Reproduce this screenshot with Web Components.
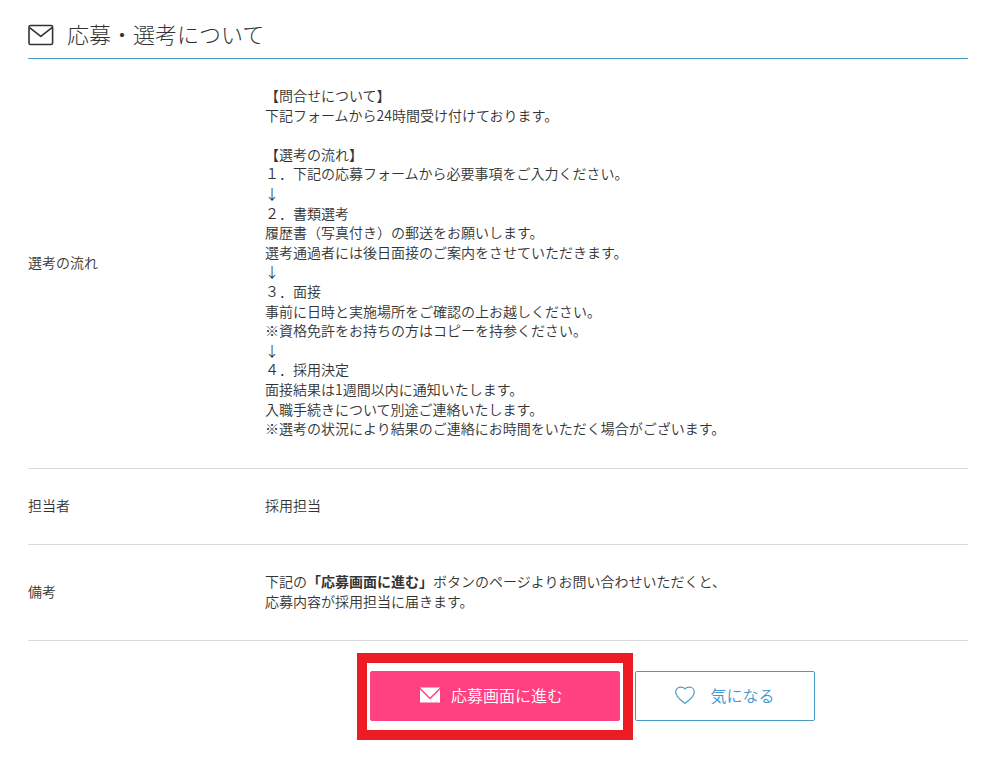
<!DOCTYPE html>
<html lang="ja">
<head>
<meta charset="utf-8">
<meta name="viewport" content="width=device-width, initial-scale=1">
<title>応募・選考について</title>
<style>
  body {
    margin: 0;
    background: #fff;
    color: #333;
    font: 350 14px/1.4 "Noto Sans CJK JP", sans-serif;
    --accent: #4a9bc5;
    --line: #d9d9d9;
  }
</style>
</head>
<body>
<application-section>
  <section-heading slot="heading">応募・選考について</section-heading>
  <selection-details></selection-details>
  <action-bar slot="actions">
    <action-button kind="apply" slot="primary">応募画面に進む</action-button>
    <action-button kind="keep">気になる</action-button>
  </action-bar>
</application-section>

<script>
  function define(name, html) {
    const template = document.createElement('template');
    template.innerHTML = html;
    customElements.define(name, class extends HTMLElement {
      constructor() {
        super();
        this.attachShadow({ mode: 'open' }).append(template.content.cloneNode(true));
      }
    });
  }

  define('application-section', `
    <style>
      :host { display: block; padding: 12px 32px 28px 28px; }
    </style>
    <section>
      <slot name="heading"></slot>
      <slot></slot>
      <slot name="actions"></slot>
    </section>`);

  define('section-heading', `
    <style>
      :host { display: block; border-bottom: 1px solid var(--accent); }
      h2 {
        display: flex; align-items: center; gap: 13px;
        height: 46px; margin: 0;
        font-size: 22px; font-weight: 300; line-height: 32px;
      }
      svg { flex: none; }
      span { padding-bottom: 4px; }
    </style>
    <h2>
      <svg width="26" height="22" viewBox="0 0 26 22" fill="none" stroke="#333" stroke-width="1.6" stroke-linejoin="round" aria-hidden="true">
        <rect x="1" y="1.5" width="23.6" height="19" rx="1.6"/>
        <path d="M1.6 3.6 12.8 12.4 24 3.6"/>
      </svg>
      <span><slot></slot></span>
    </h2>`);

  define('selection-details', `
    <style>
      :host { display: block; }
      table { width: 100%; border-collapse: separate; border-spacing: 0; table-layout: fixed; }
      th, td {
        padding: 27px 2px 29px; text-align: left; vertical-align: middle;
        font-weight: inherit; border-bottom: 1px solid var(--line);
      }
      th { width: 25%; box-sizing: border-box; padding-left: 0; }
      strong { font-weight: 700; }
    </style>
    <table>
      <tbody>
        <tr>
          <th scope="row">選考の流れ</th>
          <td>【問合せについて】<br>下記フォームから24時間受け付けております。<br><br>【選考の流れ】<br>１．下記の応募フォームから必要事項をご入力ください。<br>↓<br>２．書類選考<br>履歴書（写真付き）の郵送をお願いします。<br>選考通過者には後日面接のご案内をさせていただきます。<br>↓<br>３．面接<br>事前に日時と実施場所をご確認の上お越しください。<br>※資格免許をお持ちの方はコピーを持参ください。<br>↓<br>４．採用決定<br>面接結果は1週間以内に通知いたします。<br>入職手続きについて別途ご連絡いたします。<br>※選考の状況により結果のご連絡にお時間をいただく場合がございます。</td>
        </tr>
        <tr>
          <th scope="row">担当者</th>
          <td>採用担当</td>
        </tr>
        <tr>
          <th scope="row">備考</th>
          <td>下記の<strong>「応募画面に進む」</strong>ボタンのページよりお問い合わせいただくと、<br>応募内容が採用担当に届きます。</td>
        </tr>
      </tbody>
    </table>`);

  define('action-bar', `
    <style>
      :host { display: flex; align-items: flex-start; gap: 2px; padding: 12px 0 0 35%; }
      .highlight { border: 10px solid #ec1c24; padding: 8px 3px 9px; }
      .secondary { padding-top: 18px; }
    </style>
    <div class="highlight"><slot name="primary"></slot></div>
    <div class="secondary"><slot></slot></div>`);

  define('action-button', `
    <style>
      :host { display: block; }
      button {
        display: flex; align-items: center; justify-content: center;
        box-sizing: border-box; height: 50px; margin: 0; padding: 0 0 2px;
        border: 1px solid; border-radius: 2px;
        font: inherit; font-size: 16px; line-height: 24px;
        white-space: nowrap; cursor: pointer;
      }
      svg { flex: none; display: none; }
      :host([kind="apply"]) button {
        width: 250px; gap: 11px; padding-right: 7px;
        border-color: #ff4081; background: #ff4081; color: #fff;
      }
      :host([kind="keep"]) button {
        width: 180px; gap: 15px;
        border-color: var(--accent); background: #fff; color: #3d97cb;
      }
      :host([kind="apply"]) .mail, :host([kind="keep"]) .heart { display: block; }
    </style>
    <button type="button">
      <svg class="mail" width="20" height="16" viewBox="0 0 20 16" fill="#fff" aria-hidden="true">
        <path d="M0 .5H20L10 10.4Z"/>
        <path d="M0 2.4 10 12.4 20 2.4V15.5H0Z"/>
      </svg>
      <svg class="heart" width="20" height="18" viewBox="0 0 20 18" fill="none" stroke="#4a9bc5" stroke-width="1.2" stroke-linejoin="round" aria-hidden="true">
        <path d="M10 17.4C7.4 15.3.7 11.3.7 6 .7 3.2 2.8 1.2 5.4 1.2 7.4 1.2 9 1.6 10 2.8 11 1.6 12.6 1.2 14.6 1.2 17.2 1.2 19.3 3.2 19.3 6 19.3 11.3 12.6 15.3 10 17.4Z"/>
      </svg>
      <span><slot></slot></span>
    </button>`);
</script>
</body>
</html>
